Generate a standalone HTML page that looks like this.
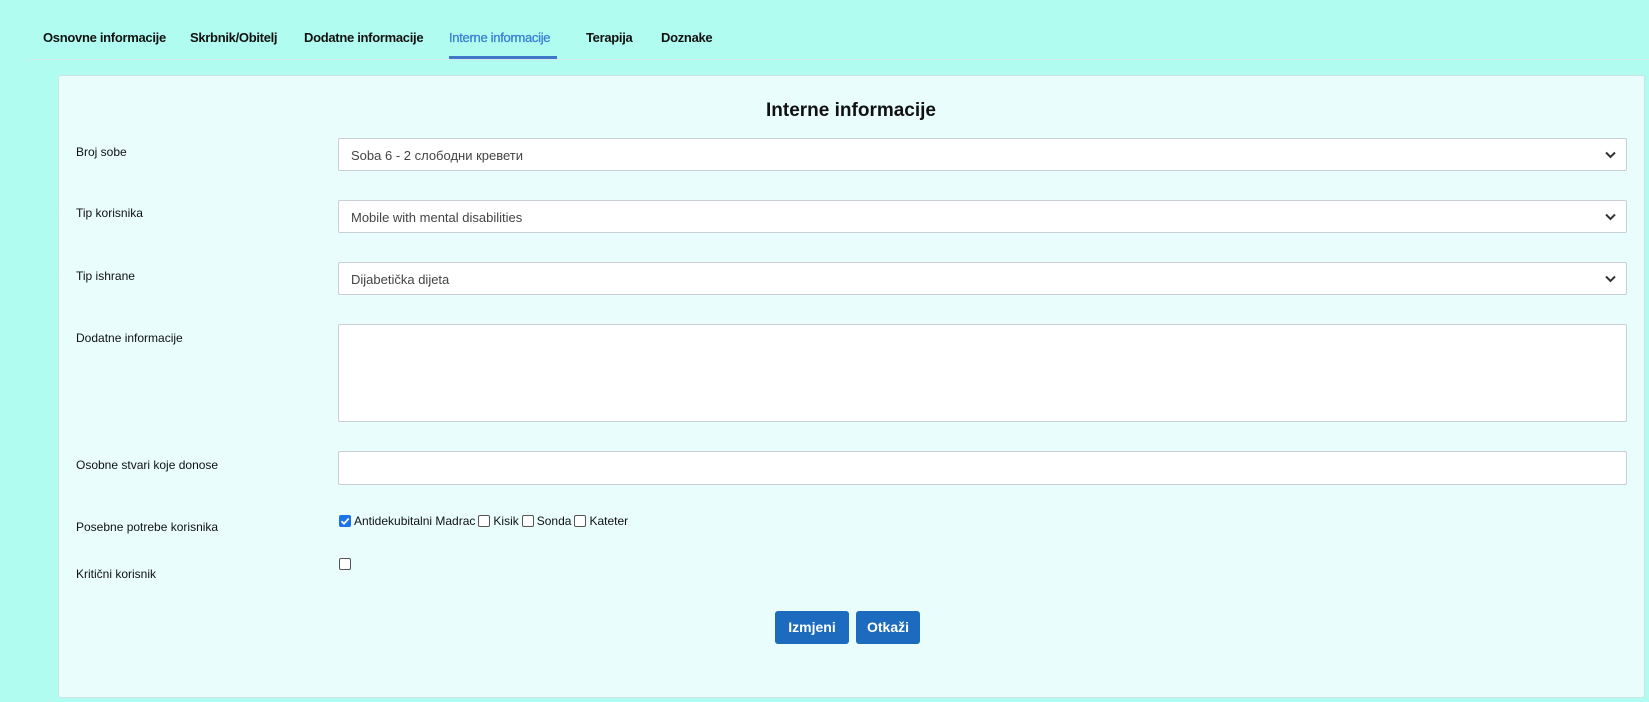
<!DOCTYPE html>
<html><head><meta charset="utf-8">
<style>
*{box-sizing:border-box;margin:0;padding:0}
body{width:1649px;height:702px;overflow:hidden;background:#b0fcf1;font-family:"Liberation Sans",sans-serif;position:relative;color:#111}
.nav{position:absolute;top:0;left:0;width:1649px;height:60px}
.tab{position:absolute;top:30px;font-size:13px;font-weight:bold;letter-spacing:-0.3px;color:#111}
.tab.act{color:#3b7fd4;font-weight:normal;-webkit-text-stroke:0.3px #3b7fd4}
.uline{position:absolute;left:449px;width:108px;top:56px;height:3px;background:#3f78c9}
.navline{position:absolute;left:26px;right:0;top:59px;height:1px;background:#cfeeea}
.panel{position:absolute;left:58px;top:75px;width:1587px;height:623px;background:#e8fdfc;border:1px solid #cfe3e3;border-radius:3px}
.title{position:absolute;left:751px;width:200px;top:100px;text-align:center;font-size:19px;font-weight:bold;white-space:nowrap}
.lbl{position:absolute;left:76px;font-size:12px;color:#111}
.sel{position:absolute;left:338px;width:1289px;height:33px;background:#fff;border:1px solid #c9cfd4;border-radius:2px;font-size:13px;color:#444;padding:9px 0 0 12px}
.sel svg{position:absolute;right:10px;top:12px}
.box{position:absolute;left:338px;width:1289px;background:#fff;border:1px solid #c9cfd4;border-radius:2px}
.cbrow{position:absolute;left:339px;top:514px;font-size:12px;display:flex;align-items:center}
.cb{width:12px;height:12px;border:1px solid #555;border-radius:2px;background:#fff;display:inline-block;margin-right:3px;margin-left:3px}
.cb.on{background:#1a73e8;border-color:#1a73e8;position:relative}
.btn{position:absolute;top:611px;height:33px;background:#1c6bbf;color:#fff;font-size:14px;font-weight:bold;border-radius:3px;text-align:center;line-height:33px}
</style></head><body>
<div class="nav">
<span class="tab" style="left:43px">Osnovne informacije</span>
<span class="tab" style="left:190px">Skrbnik/Obitelj</span>
<span class="tab" style="left:304px">Dodatne informacije</span>
<span class="tab act" style="left:449px">Interne informacije</span>
<span class="tab" style="left:586px">Terapija</span>
<span class="tab" style="left:661px">Doznake</span>
<div class="navline"></div>
<div class="uline"></div>
</div>
<div class="panel"></div>
<div class="title">Interne informacije</div>

<div class="lbl" style="top:145px">Broj sobe</div>
<div class="sel" style="top:138px">Soba 6 - 2 слободни кревети<svg width="11" height="8" viewBox="0 0 11 8"><path d="M1 1.5 L5.5 6 L10 1.5" stroke="#333" stroke-width="2" fill="none"/></svg></div>

<div class="lbl" style="top:206px">Tip korisnika</div>
<div class="sel" style="top:200px">Mobile with mental disabilities<svg width="11" height="8" viewBox="0 0 11 8"><path d="M1 1.5 L5.5 6 L10 1.5" stroke="#333" stroke-width="2" fill="none"/></svg></div>

<div class="lbl" style="top:269px">Tip ishrane</div>
<div class="sel" style="top:262px">Dijabetička dijeta<svg width="11" height="8" viewBox="0 0 11 8"><path d="M1 1.5 L5.5 6 L10 1.5" stroke="#333" stroke-width="2" fill="none"/></svg></div>

<div class="lbl" style="top:331px">Dodatne informacije</div>
<div class="box" style="top:324px;height:98px"></div>

<div class="lbl" style="top:458px">Osobne stvari koje donose</div>
<div class="box" style="top:451px;height:34px"></div>

<div class="lbl" style="top:520px">Posebne potrebe korisnika</div>
<div class="cbrow"><span class="cb on" style="margin-left:0"><svg width="12" height="12" viewBox="0 0 12 12" style="position:absolute;left:-1px;top:-1px"><path d="M2.5 6.2 L5 8.7 L9.7 3.5" stroke="#fff" stroke-width="1.8" fill="none"/></svg></span>Antidekubitalni Madrac<span class="cb"></span>Kisik<span class="cb"></span>Sonda<span class="cb"></span>Kateter</div>

<div class="lbl" style="top:567px">Kritični korisnik</div>
<span class="cb" style="position:absolute;left:339px;top:558px;margin:0"></span>

<div class="btn" style="left:775px;width:74px">Izmjeni</div>
<div class="btn" style="left:856px;width:64px">Otkaži</div>
</body></html>
